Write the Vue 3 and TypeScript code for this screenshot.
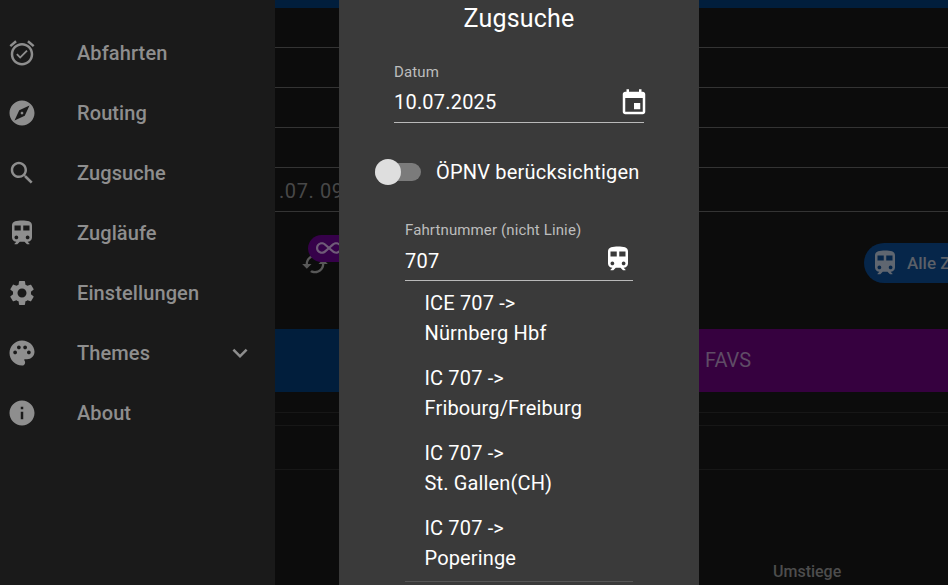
<script setup lang="ts">
interface NavItem { label: string; icon: string; expand?: boolean }

const paths: Record<string, string> = {
  alarm: 'M22 5.72l-4.6-3.86-1.29 1.53 4.6 3.86L22 5.72zM7.88 3.39L6.6 1.86 2 5.71l1.29 1.53 4.59-3.85zM12 4c-4.97 0-9 4.03-9 9s4.02 9 9 9c4.97 0 9-4.03 9-9s-4.03-9-9-9zm0 16c-3.87 0-7-3.13-7-7s3.13-7 7-7 7 3.13 7 7-3.13 7-7 7zm-1.46-5.47L8.41 12.4l-1.06 1.06 3.18 3.18 6-6-1.06-1.06-4.93 4.95z',
  explore: 'M12 10.9c-.61 0-1.1.49-1.1 1.1s.49 1.1 1.1 1.1c.61 0 1.1-.49 1.1-1.1s-.49-1.1-1.1-1.1zM12 2C6.48 2 2 6.48 2 12s4.48 10 10 10 10-4.48 10-10S17.52 2 12 2zm2.19 12.19L6 18l3.81-8.19L18 6l-3.81 8.19z',
  search: 'M15.5 14h-.79l-.28-.27C15.41 12.59 16 11.11 16 9.5 16 5.91 13.09 3 9.5 3S3 5.91 3 9.5 5.91 16 9.5 16c1.61 0 3.09-.59 4.23-1.57l.27.28v.79l5 4.99L20.49 19l-4.99-5zm-6 0C7.01 14 5 11.99 5 9.5S7.01 5 9.5 5 14 7.01 14 9.5 11.99 14 9.5 14z',
  train: 'M12 2c-4 0-8 .5-8 4v9.5C4 17.43 5.57 19 7.5 19L6 20.5v.5h2.23l2-2H14l2 2h2v-.5L16.5 19c1.93 0 3.5-1.57 3.5-3.5V6c0-3.5-3.58-4-8-4zM7.5 17c-.83 0-1.5-.67-1.5-1.5S6.67 14 7.5 14s1.5.67 1.5 1.5S8.33 17 7.5 17zm3.5-7H6V6h5v4zm2 0V6h5v4h-5zm3.5 7c-.83 0-1.5-.67-1.5-1.5s.67-1.5 1.5-1.5 1.5.67 1.5 1.5-.67 1.5-1.5 1.5z',
  settings: 'M19.14,12.94c0.04-0.3,0.06-0.61,0.06-0.94c0-0.32-0.02-0.64-0.07-0.94l2.03-1.58c0.18-0.14,0.23-0.41,0.12-0.61l-1.92-3.32c-0.12-0.22-0.37-0.29-0.59-0.22l-2.39,0.96c-0.5-0.38-1.03-0.7-1.62-0.94L14.4,2.81c-0.04-0.24-0.24-0.41-0.48-0.41h-3.84c-0.24,0-0.43,0.17-0.47,0.41L9.25,5.35C8.66,5.59,8.12,5.92,7.63,6.29L5.24,5.33c-0.22-0.08-0.47,0-0.59,0.22L2.74,8.87C2.62,9.08,2.66,9.34,2.86,9.48l2.03,1.58C4.84,11.36,4.8,11.69,4.8,12s0.02,0.64,0.07,0.94l-2.03,1.58c-0.18,0.14-0.23,0.41-0.12,0.61l1.92,3.32c0.12,0.22,0.37,0.29,0.59,0.22l2.39-0.96c0.5,0.38,1.03,0.7,1.62,0.94l0.36,2.54c0.05,0.24,0.24,0.41,0.48,0.41h3.84c0.24,0,0.44-0.17,0.47-0.41l0.36-2.54c0.59-0.24,1.13-0.56,1.62-0.94l2.39,0.96c0.22,0.08,0.47,0,0.59-0.22l1.92-3.32c0.12-0.22,0.07-0.47-0.12-0.61L19.14,12.94z M12,15.6c-1.98,0-3.6-1.62-3.6-3.6s1.62-3.6,3.6-3.6s3.6,1.62,3.6,3.6S13.98,15.6,12,15.6z',
  palette: 'M12 2C6.49 2 2 6.49 2 12s4.49 10 10 10c1.38 0 2.5-1.12 2.5-2.5 0-.61-.23-1.2-.64-1.67-.08-.1-.13-.21-.13-.33 0-.28.22-.5.5-.5H16c3.31 0 6-2.69 6-6 0-4.96-4.49-9-10-9zm-5.5 11c-.83 0-1.5-.67-1.5-1.5S5.67 10 6.5 10s1.5.67 1.5 1.5S7.33 13 6.5 13zm3-4C8.67 9 8 8.33 8 7.5S8.67 6 9.5 6s1.5.67 1.5 1.5S10.33 9 9.5 9zm5 0c-.83 0-1.5-.67-1.5-1.5S13.67 6 14.5 6s1.5.67 1.5 1.5S15.33 9 14.5 9zm3 4c-.83 0-1.5-.67-1.5-1.5s.67-1.5 1.5-1.5 1.5.67 1.5 1.5-.67 1.5-1.5 1.5z',
  info: 'M12 2C6.48 2 2 6.48 2 12s4.48 10 10 10 10-4.48 10-10S17.52 2 12 2zm1 15h-2v-6h2v6zm0-8h-2V7h2v2z',
  chevron: 'M7.41 8.59L12 13.17l4.59-4.58L18 10l-6 6-6-6 1.41-1.41z',
  event: 'M17 12h-5v5h5v-5zM16 1v2H8V1H6v2H5c-1.11 0-1.99.9-1.99 2L3 19c0 1.1.89 2 2 2h14c1.1 0 2-.9 2-2V5c0-1.1-.9-2-2-2h-1V1h-2zm3 18H5V8h14v11z',
  cached: 'M19 8l-4 4h3c0 3.31-2.69 6-6 6-1.01 0-1.97-.25-2.8-.7l-1.46 1.46C8.97 19.54 10.43 20 12 20c4.42 0 8-3.58 8-8h3l-4-4zM6 12c0-3.31 2.69-6 6-6 1.01 0 1.97.25 2.8.7l1.46-1.46C15.03 4.46 13.57 4 12 4c-4.42 0-8 3.58-8 8H1l4 4 4-4H6z',
  infinity: 'M18.6 6.62C21.58 6.62 24 9 24 12C24 14.96 21.58 17.37 18.6 17.37C17.15 17.37 15.8 16.81 14.78 15.8L12 13.34L9.17 15.85C8.2 16.82 6.84 17.38 5.4 17.38C2.42 17.38 0 14.96 0 12C0 9.04 2.42 6.62 5.4 6.62C6.84 6.62 8.2 7.18 9.22 8.2L12 10.66L14.83 8.15C15.8 7.18 17.16 6.62 18.6 6.62M7.8 14.39L10.5 12L7.84 9.65C7.16 8.97 6.31 8.62 5.4 8.62C3.53 8.62 2 10.13 2 12C2 13.87 3.53 15.38 5.4 15.38C6.31 15.38 7.16 15.03 7.8 14.39M16.2 9.61L13.5 12L16.16 14.35C16.84 15.03 17.7 15.38 18.6 15.38C20.47 15.38 22 13.87 22 12C22 10.13 20.47 8.62 18.6 8.62C17.69 8.62 16.84 8.97 16.2 9.61Z'
}

const nav: NavItem[] = [
  { label: 'Abfahrten', icon: 'alarm' },
  { label: 'Routing', icon: 'explore' },
  { label: 'Zugsuche', icon: 'search' },
  { label: 'Zugläufe', icon: 'train' },
  { label: 'Einstellungen', icon: 'settings' },
  { label: 'Themes', icon: 'palette', expand: true },
  { label: 'About', icon: 'info' }
]

const results: [string, string][] = [
  ['ICE 707 ->', 'Nürnberg Hbf'],
  ['IC 707 ->', 'Fribourg/Freiburg'],
  ['IC 707 ->', 'St. Gallen(CH)'],
  ['IC 707 ->', 'Poperinge']
]
</script>

<template>
  <div class="app">
    <aside class="drawer">
      <div v-for="item in nav" :key="item.label" class="nav-item">
        <svg class="nav-icon" viewBox="0 0 24 24"><path :d="paths[item.icon]" /></svg>
        <span class="nav-label">{{ item.label }}</span>
        <svg v-if="item.expand" class="nav-chevron" viewBox="0 0 24 24"><path :d="paths.chevron" /></svg>
      </div>
    </aside>

    <main class="page">
      <div class="topbar"></div>
      <div class="row"></div>
      <div class="row"></div>
      <div class="row"></div>
      <div class="row"></div>
      <div class="row row-date">.07. 09:30</div>
      <div class="filters">
        <div class="left-filter">
          <svg class="sync" viewBox="0 0 24 24"><path :d="paths.cached" /></svg>
          <div class="chip-purple">
            <svg viewBox="0 0 24 24"><path :d="paths.infinity" /></svg>
          </div>
        </div>
        <div class="chip-blue">
          <svg viewBox="0 0 24 24"><path :d="paths.train" /></svg>
          <span>Alle Züge</span>
        </div>
      </div>
      <div class="bands">
        <div class="band-blue"></div>
        <div class="band-purple">FAVS</div>
      </div>
      <div class="faint f1"></div>
      <div class="faint f2"></div>
      <div class="faint f3"></div>
      <div class="footer-label">Umstiege</div>
    </main>

    <section class="dialog">
      <h2 class="title">Zugsuche</h2>

      <div class="field date-field">
        <label>Datum</label>
        <div class="value-row">
          <span>10.07.2025</span>
          <svg viewBox="0 0 24 24"><path :d="paths.event" /></svg>
        </div>
      </div>

      <div class="toggle-row">
        <div class="switch"><div class="thumb"></div></div>
        <span>ÖPNV berücksichtigen</span>
      </div>

      <div class="field number-field">
        <label>Fahrtnummer (nicht Linie)</label>
        <div class="value-row">
          <span>707</span>
          <svg viewBox="0 0 24 24"><path :d="paths.train" /></svg>
        </div>
      </div>

      <ul class="results">
        <li v-for="(r, i) in results" :key="i">
          <div>{{ r[0] }}</div>
          <div>{{ r[1] }}</div>
        </li>
      </ul>
    </section>
  </div>
</template>

<style scoped>
.app {
  position: relative;
  width: 948px;
  height: 585px;
  overflow: hidden;
  display: flex;
  background: #0c0c0c;
  font-family: Roboto, "Liberation Sans", sans-serif;
}

/* drawer */
.drawer {
  width: 275px;
  flex: none;
  padding-top: 23px;
  background: #1a1a1a;
  box-sizing: border-box;
}
.nav-item {
  height: 60px;
  display: flex;
  align-items: center;
  padding-left: 7px;
  color: #8e8e8e;
}
.nav-icon {
  width: 30px;
  height: 30px;
  flex: none;
  fill: #8e8e8e;
}
.nav-label {
  margin-left: 40px;
  font-size: 20px;
  letter-spacing: 0.1px;
  font-weight: 500;
}
.nav-chevron {
  width: 30px;
  height: 30px;
  margin-left: auto;
  margin-right: 20px;
  fill: #8e8e8e;
}

/* dimmed page */
.page {
  flex: 1;
  min-width: 0;
  display: flex;
  flex-direction: column;
}
.topbar {
  height: 8px;
  background: #011e3c;
}
.row {
  height: 40px;
  box-sizing: border-box;
  border-bottom: 1px solid #343434;
}
.row-date {
  height: 44px;
  padding: 9px 0 0 4px;
  font-size: 20px;
  line-height: 28px;
  letter-spacing: 0.6px;
  color: #484848;
  white-space: nowrap;
}
.filters {
  height: 117px;
  display: flex;
  justify-content: space-between;
  align-items: flex-start;
}
.left-filter {
  position: relative;
  margin-left: 33px;
  margin-top: 23px;
}
.sync {
  position: absolute;
  left: -7px;
  top: 15px;
  width: 28px;
  height: 28px;
  fill: #585858;
}
.chip-purple {
  position: relative;
  width: 120px;
  height: 27px;
  border-radius: 14px;
  background: #36014a;
  box-sizing: border-box;
  padding-left: 8px;
}
.chip-purple svg {
  display: block;
  width: 26px;
  height: 26px;
  fill: #6f5b78;
}
.chip-blue {
  display: flex;
  align-items: center;
  margin-top: 31px;
  width: 120px;
  margin-right: -36px;
  height: 40px;
  flex: none;
  padding-left: 6px;
  box-sizing: border-box;
  border-radius: 20px;
  background: #06264a;
  color: #5c6068;
  font-size: 17px;
  font-weight: 500;
  white-space: nowrap;
}
.chip-blue svg {
  width: 30px;
  height: 30px;
  flex: none;
  fill: #5f6670;
}
.chip-blue span {
  margin-left: 7px;
  margin-top: -1px;
}
.bands {
  height: 63px;
  flex: none;
  display: flex;
}
.band-blue {
  flex: 0 0 336px;
  background: #011e3c;
}
.band-purple {
  flex: 1;
  background: #36013f;
  color: #5f4c66;
  font-size: 20px;
  line-height: 62px;
  padding-left: 94px;
}
.faint {
  border-bottom: 1px solid #171717;
}
.f1 { margin-top: 20px; }
.f2 { margin-top: 12px; }
.f3 { margin-top: 43px; }
.footer-label {
  margin-top: 92px;
  margin-left: 498px;
  font-size: 16px;
  line-height: 20px;
  color: #4d4d4d;
  font-weight: 500;
}

/* dialog */
.dialog {
  position: absolute;
  left: 339px;
  top: 0;
  width: 360px;
  height: 585px;
  overflow: hidden;
  background: #3a3a3a;
  color: #fff;
}
.title {
  margin: 0;
  height: 36px;
  font-size: 25px;
  font-weight: 400;
  line-height: 37px;
  text-align: center;
  letter-spacing: 0.2px;
}
.field label {
  display: block;
  font-size: 15px;
  line-height: 20px;
  letter-spacing: 0.13px;
  color: #bdbdbd;
}
.date-field {
  margin: 26px 0 0 55px;
  width: 250px;
}
.number-field {
  margin: 35px 0 0 66px;
  width: 228px;
}
.value-row {
  display: flex;
  align-items: center;
  justify-content: space-between;
  font-size: 20px;
  letter-spacing: 0.2px;
  border-bottom: 1px solid #b9b9b9;
  height: 41px;
  box-sizing: border-box;
}
.value-row svg {
  width: 30px;
  height: 30px;
  fill: #fff;
}
.date-field svg {
  margin-right: -5px;
  margin-top: 2px;
}
.number-field .value-row {
  padding-top: 2px;
}
.number-field svg {
  margin-top: -4px;
}
.toggle-row {
  display: flex;
  align-items: center;
  margin: 36px 0 0 36px;
  height: 26px;
  font-size: 20px;
  letter-spacing: 0.2px;
}
.toggle-row span {
  margin-left: 15px;
}
.switch {
  position: relative;
  width: 46px;
  height: 18px;
  border-radius: 9px;
  background: #7b7b7b;
}
.thumb {
  position: absolute;
  left: 0;
  top: -4px;
  width: 26px;
  height: 26px;
  border-radius: 50%;
  background: #dedede;
}
.results {
  list-style: none;
  margin: 7px 0 0 66px;
  padding: 0 0 8px 19.5px;
  width: 228px;
  box-sizing: border-box;
  border-bottom: 1px solid #555;
  font-size: 20px;
  line-height: 30px;
  letter-spacing: 0.15px;
}
.results li {
  height: 75px;
}
.results li:last-child {
  height: 60px;
}
</style>

<style>
html, body { margin: 0; background: #0c0c0c; }
</style>
